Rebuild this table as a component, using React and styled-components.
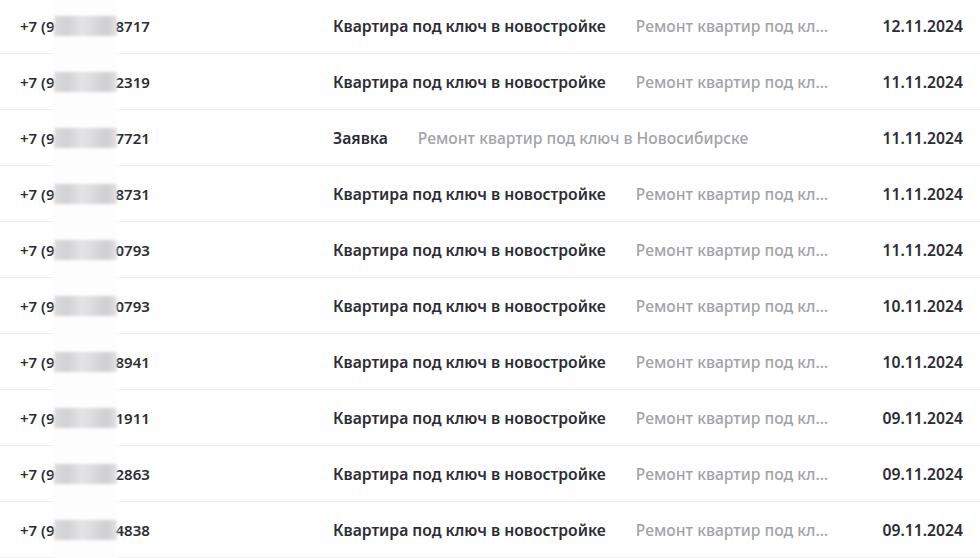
import React from "react";
import styled, { createGlobalStyle } from "styled-components";

const GlobalStyle = createGlobalStyle`
  body {
    margin: 0;
    background: #fff;
    font-family: "Noto Sans", "Lato", sans-serif;
  }
`;

const leads = [
  { start: "+7 (9", end: "8717", title: "Квартира под ключ в новостройке", sub: "Ремонт квартир под ключ в Новосибирске", date: "12.11.2024" },
  { start: "+7 (9", end: "2319", title: "Квартира под ключ в новостройке", sub: "Ремонт квартир под ключ в Новосибирске", date: "11.11.2024" },
  { start: "+7 (9", end: "7721", title: "Заявка", sub: "Ремонт квартир под ключ в Новосибирске", date: "11.11.2024" },
  { start: "+7 (9", end: "8731", title: "Квартира под ключ в новостройке", sub: "Ремонт квартир под ключ в Новосибирске", date: "11.11.2024" },
  { start: "+7 (9", end: "0793", title: "Квартира под ключ в новостройке", sub: "Ремонт квартир под ключ в Новосибирске", date: "11.11.2024" },
  { start: "+7 (9", end: "0793", title: "Квартира под ключ в новостройке", sub: "Ремонт квартир под ключ в Новосибирске", date: "10.11.2024" },
  { start: "+7 (9", end: "8941", title: "Квартира под ключ в новостройке", sub: "Ремонт квартир под ключ в Новосибирске", date: "10.11.2024" },
  { start: "+7 (9", end: "1911", title: "Квартира под ключ в новостройке", sub: "Ремонт квартир под ключ в Новосибирске", date: "09.11.2024" },
  { start: "+7 (9", end: "2863", title: "Квартира под ключ в новостройке", sub: "Ремонт квартир под ключ в Новосибирске", date: "09.11.2024" },
  { start: "+7 (9", end: "4838", title: "Квартира под ключ в новостройке", sub: "Ремонт квартир под ключ в Новосибирске", date: "09.11.2024" },
];

function App() {
  return (
    <>
      <GlobalStyle />
      <List>
        {leads.map((lead, i) => (
          <Row key={i}>
            <Phone>
              {lead.start}
              <Hidden />
              {lead.end}
            </Phone>
            <Middle>
              <Title>{lead.title}</Title>
              <Sub>{lead.sub}</Sub>
            </Middle>
            <DateCell>{lead.date}</DateCell>
          </Row>
        ))}
      </List>
    </>
  );
}

const List = styled.div`
  margin-top: -2px;
  overflow: hidden;
  height: 560px;
`;

const Row = styled.div`
  display: grid;
  grid-template-columns: 313px 497px 1fr;
  align-items: center;
  height: 55px;
  padding: 0 17px 0 20px;
  border-bottom: 1px solid #f0f0f2;
  color: #2b2d33;
  font-size: 15.7px;
  font-weight: 600;
`;

const Phone = styled.div`
  display: flex;
  align-items: center;
  white-space: nowrap;
  font-size: 15px;
`;

// blurred middle digits of the number
const Hidden = styled.span`
  position: relative;
  display: inline-block;
  width: 63px;
  height: 20px;
  margin: 0 -1px;
  background: linear-gradient(
    90deg,
    #dcdcde 0%,
    #d2d2d4 20%,
    #e4e4e6 45%,
    #d6d6d8 70%,
    #cfcfd1 85%,
    #e2e2e4 100%
  );
  filter: blur(1.5px);

  &::before,
  &::after {
    content: "";
    position: absolute;
    left: 0;
    right: 0;
    height: 26px;
    background: #fdfdfd;
  }
  &::before {
    bottom: 100%;
  }
  &::after {
    top: 100%;
  }
`;

const Middle = styled.div`
  display: flex;
  align-items: center;
  gap: 30px;
  min-width: 0;
`;

const Title = styled.span`
  white-space: nowrap;
  flex-shrink: 0;
`;

const Sub = styled.span`
  color: #a2a3a8;
  font-weight: 500;
  white-space: nowrap;
  overflow: hidden;
  text-overflow: ellipsis;
  min-width: 0;
`;

const DateCell = styled.div`
  text-align: right;
`;

export default App;
